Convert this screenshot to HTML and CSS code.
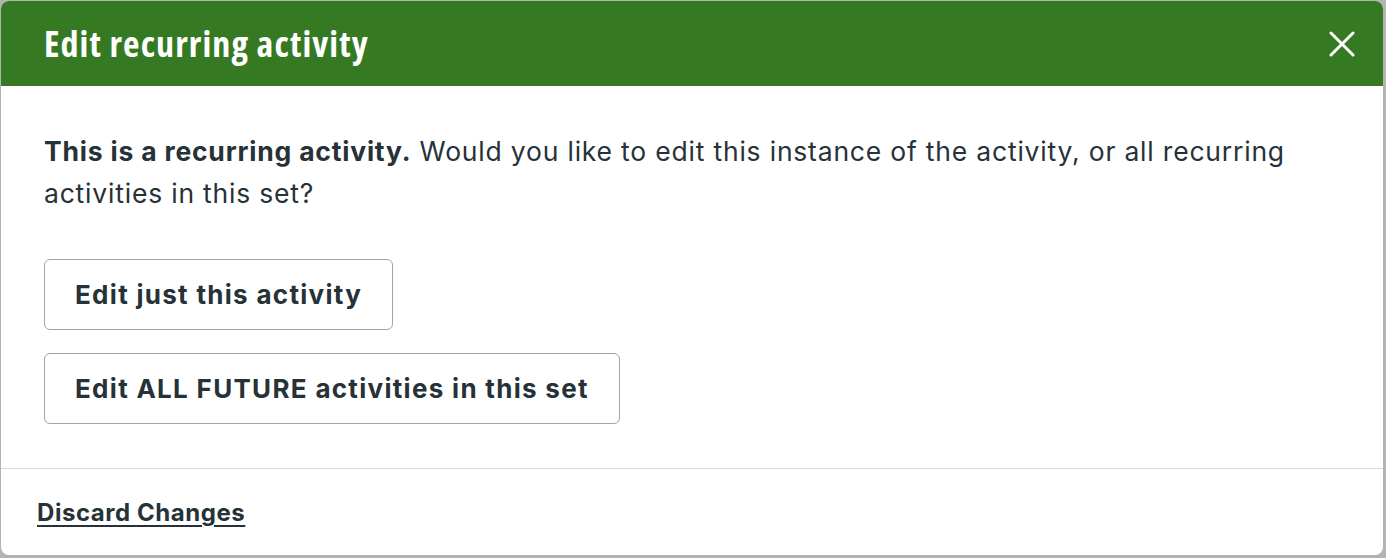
FILE: index.html
```html
<!DOCTYPE html>
<html lang="en">
<head>
    <meta charset="UTF-8">
    <meta name="viewport" content="width=device-width, initial-scale=1.0">
    <title>Edit recurring activity</title>
    <link rel="stylesheet" href="styles.css">
</head>
<body>
    <div class="modal">
        <div class="modal-header">
            <h2 class="modal-title">Edit recurring activity</h2>
            <button class="close-btn" aria-label="Close">
                <svg width="26" height="26" viewBox="0 0 26 26">
                    <path d="M2 2 L24 24 M24 2 L2 24" stroke="#fff" stroke-width="3" stroke-linecap="round"/>
                </svg>
            </button>
        </div>
        <div class="modal-body">
            <p class="intro"><strong>This is a recurring activity.</strong> Would you like to edit this instance of the activity, or all recurring activities in this set?</p>
            <div class="choices">
                <button class="choice">Edit just this activity</button>
                <button class="choice">Edit ALL FUTURE activities in this set</button>
            </div>
        </div>
        <div class="modal-footer">
            <a href="#" class="discard">Discard Changes</a>
        </div>
    </div>
</body>
</html>
```

FILE: styles.css
```css
body {
    margin: 0;
    background-color: #b3b3b3;
    font-family: Inter, "Noto Sans", sans-serif;
    color: #263238;
}
.modal {
    margin: 1px 0 0 1px;
    width: 1382px;
    height: 554px;
    background-color: #fff;
    border-radius: 8px;
    overflow: hidden;
    display: flex;
    flex-direction: column;
}
.modal-header {
    height: 85px;
    flex-shrink: 0;
    background-color: #357a23;
    display: flex;
    align-items: center;
    justify-content: space-between;
    padding: 0 28px 0 43px;
}
.modal-title {
    margin: 0;
    color: #fff;
    font-family: "Open Sans", sans-serif;
    font-stretch: condensed;
    font-size: 36px;
    font-weight: 700;
    letter-spacing: 1.1px;
}
.close-btn {
    background: none;
    border: none;
    padding: 0;
    display: flex;
}
.modal-body {
    padding: 44px 43px 44px 43px;
    border-bottom: 1px solid #d3d9de;
}
.intro {
    margin: 0 0 45px 0;
    font-size: 26.5px;
    line-height: 42px;
    letter-spacing: 0.8px;
}
.choices {
    display: flex;
    flex-direction: column;
    align-items: flex-start;
    gap: 23px;
}
.choice {
    height: 71px;
    padding: 0 30px;
    background-color: #fff;
    border: 1px solid #9aa6b0;
    border-radius: 6px;
    font-family: Inter, "Noto Sans", sans-serif;
    font-size: 26px;
    font-weight: 700;
    letter-spacing: 1.3px;
    color: #263238;
}
.modal-footer {
    flex: 1;
    display: flex;
    align-items: center;
    padding: 0 36px;
}
.discard {
    font-size: 24px;
    font-weight: 700;
    letter-spacing: 0.55px;
    color: #263238;
    text-decoration: underline;
    text-decoration-thickness: 2px;
    text-underline-offset: 4px;
}
```
